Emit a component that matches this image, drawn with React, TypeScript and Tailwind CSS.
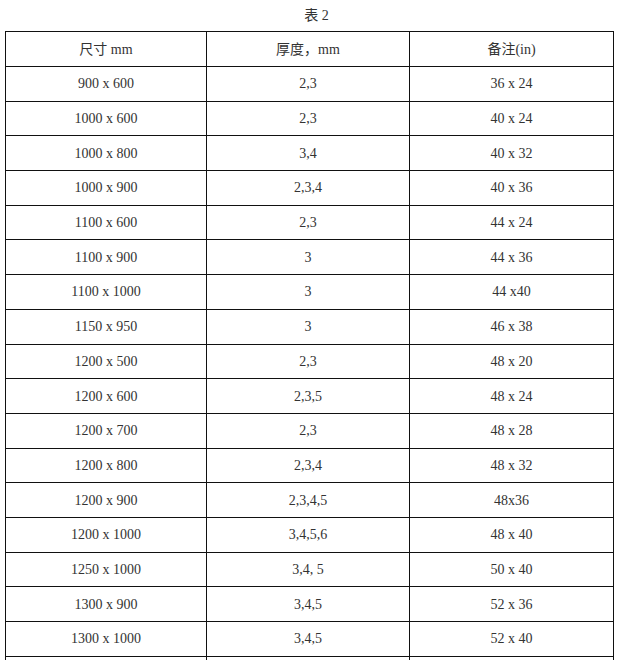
import React from "react";

const rows: [string, string, string][] = [
  ["900 x 600", "2,3", "36 x 24"],
  ["1000 x 600", "2,3", "40 x 24"],
  ["1000 x 800", "3,4", "40 x 32"],
  ["1000 x 900", "2,3,4", "40 x 36"],
  ["1100 x 600", "2,3", "44 x 24"],
  ["1100 x 900", "3", "44 x 36"],
  ["1100 x 1000", "3", "44 x40"],
  ["1150 x 950", "3", "46 x 38"],
  ["1200 x 500", "2,3", "48 x 20"],
  ["1200 x 600", "2,3,5", "48 x 24"],
  ["1200 x 700", "2,3", "48 x 28"],
  ["1200 x 800", "2,3,4", "48 x 32"],
  ["1200 x 900", "2,3,4,5", "48x36"],
  ["1200 x 1000", "3,4,5,6", "48 x 40"],
  ["1250 x 1000", "3,4, 5", "50 x 40"],
  ["1300 x 900", "3,4,5", "52 x 36"],
  ["1300 x 1000", "3,4,5", "52 x 40"],
  ["", "", ""],
];

const font = { fontFamily: '"Liberation Serif", "Noto Sans CJK SC", serif' };

export default function App() {
  return (
    <div className="w-[623px] bg-white text-[14px] text-[#333]" style={font}>
      <div className="h-[31px] flex items-center justify-center pl-[10px]">表 2</div>
      <div className="pl-[5px]">
        <table className="w-[608px] border-collapse table-fixed">
          <colgroup>
            <col className="w-[201px]" />
            <col className="w-[203px]" />
            <col className="w-[204px]" />
          </colgroup>
          <thead>
            <tr className="h-[35px]">
              <th className="border border-[#111] font-normal">尺寸 mm</th>
              <th className="border border-[#111] font-normal">厚度，mm</th>
              <th className="border border-[#111] font-normal">备注(in)</th>
            </tr>
          </thead>
          <tbody>
            {rows.map((r, i) => (
              <tr key={i} className="h-[34.7px]">
                <td className="border border-[#111] text-center p-0">{r[0]}</td>
                <td className="border border-[#111] text-center p-0">{r[1]}</td>
                <td className="border border-[#111] text-center p-0">{r[2]}</td>
              </tr>
            ))}
          </tbody>
        </table>
      </div>
    </div>
  );
}
